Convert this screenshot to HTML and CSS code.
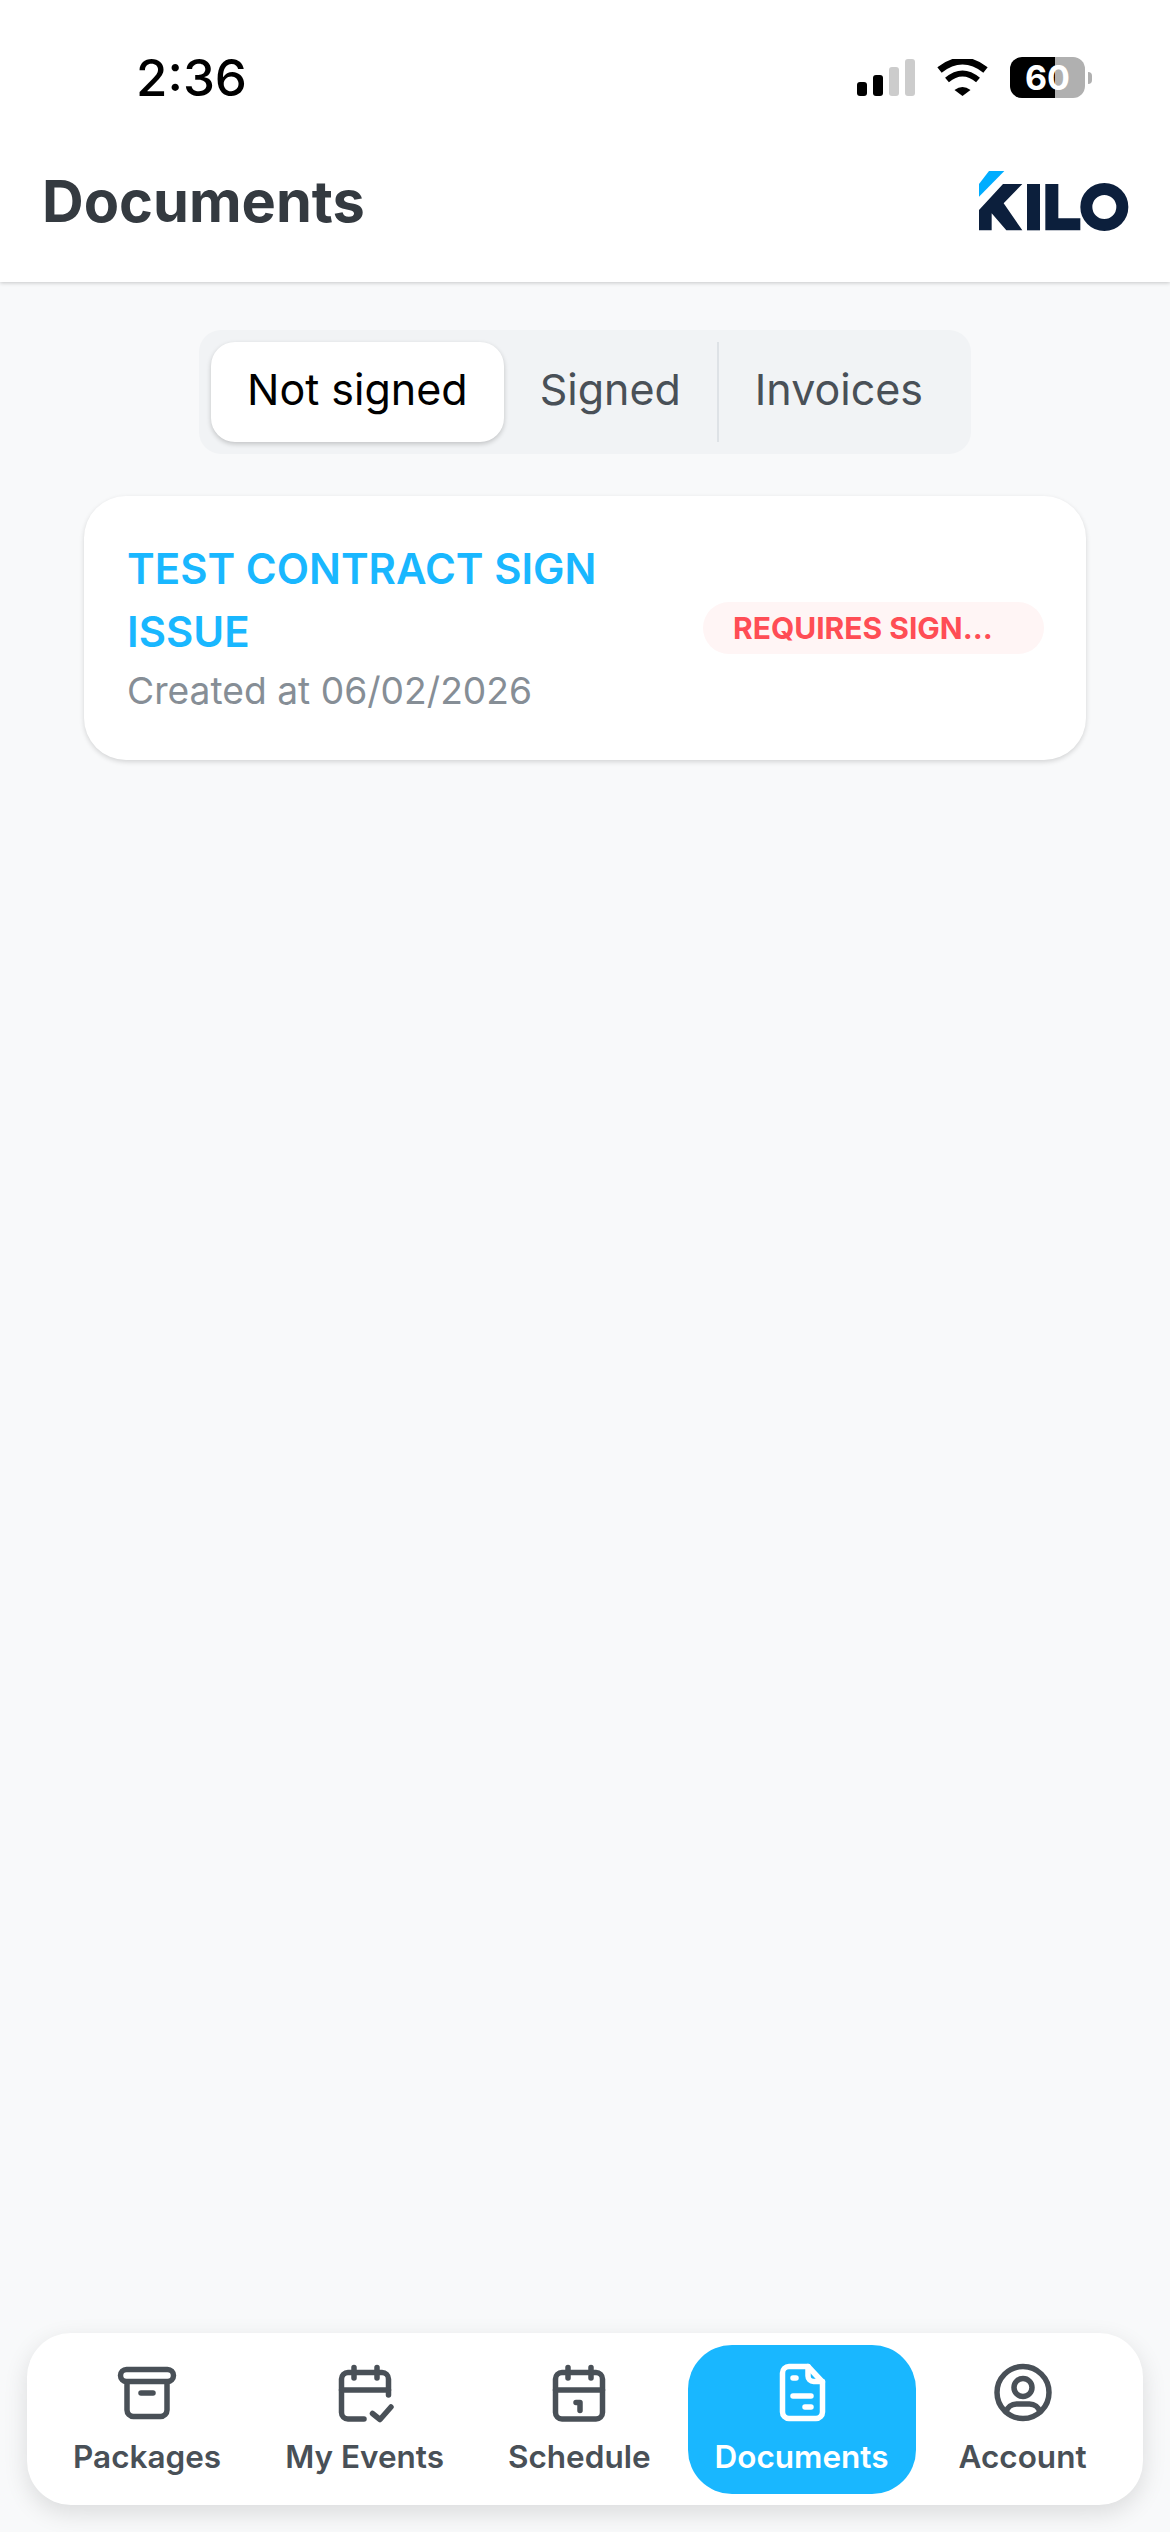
FILE: index.html
```html
<!DOCTYPE html>
<html lang="en">
<head>
  <meta charset="UTF-8" />
  <meta name="viewport" content="width=device-width, initial-scale=1.0"/>
  <title>Documents</title>
  <link rel="stylesheet" href="styles.css">
</head>
<body>
  <header class="header">
    <div class="status-bar">
      <span class="time">2:36</span>
      <div class="status-icons">
        <div class="signal">
          <span class="bar bar-on bar-1"></span>
          <span class="bar bar-on bar-2"></span>
          <span class="bar bar-3"></span>
          <span class="bar bar-4"></span>
        </div>
        <svg class="wifi" width="51" height="37" viewBox="0 0 51 37">
          <path d="M2.5 11 Q25.5 -7 48.5 11" fill="none" stroke="#000" stroke-width="7"/>
          <path d="M10 21 Q25.500 8 41 21" fill="none" stroke="#000" stroke-width="6"/>
          <path d="M17.500 31 Q25.500 25 33.500 31 L25.500 37 Z" fill="#000"/>
        </svg>
        <div class="battery">
          <div class="battery-body">60</div>
          <span class="battery-nub"></span>
        </div>
      </div>
    </div>
    <div class="title-row">
      <h1>Documents</h1>
      <svg class="logo" width="150" height="60" viewBox="54 33 450 180" aria-label="KILO">
        <path d="M84 33 H130 L54 110 V72 Z" fill="#00adff"/>
        <path d="M54 150 L126 72 H184 L128 130 L184 211 H136 L92 160 V211 H54 Z" fill="#0c1f3c"/>
        <rect x="198" y="72" width="39" height="139" fill="#0c1f3c"/>
        <path d="M253 72 H292 V175 H358 V211 H253 Z" fill="#0c1f3c"/>
        <circle cx="430" cy="141" r="54" fill="none" stroke="#0c1f3c" stroke-width="36"/>
      </svg>
    </div>
  </header>

  <main class="content">
    <div class="tabs">
      <div class="tab tab-active">Not signed</div>
      <div class="tab">Signed</div>
      <div class="tab tab-divided">Invoices</div>
    </div>

    <div class="card">
      <div class="card-text">
        <div class="card-title">TEST CONTRACT SIGN ISSUE</div>
        <div class="card-date">Created at 06/02/2026</div>
      </div>
      <div class="badge">REQUIRES SIGN...</div>
    </div>
  </main>

  <nav class="nav">
    <div class="nav-item">
      <svg class="nav-icon" viewBox="0 0 64 64">
        <rect x="5.500" y="7.500" width="53" height="12" rx="6"/>
        <path d="M12 20 V48 a6.500 6.500 0 0 0 6.500 6.500 H45.500 a6.500 6.500 0 0 0 6.500 -6.500 V20"/>
        <path d="M26 31 H38"/>
      </svg>
      <span>Packages</span>
    </div>
    <div class="nav-item">
      <svg class="nav-icon" viewBox="0 0 64 64">
        <path d="M31 57 H15 a6.500 6.500 0 0 1 -6.500 -6.500 V17 a6.500 6.500 0 0 1 6.500 -6.500 H49 a6.500 6.500 0 0 1 6.500 6.500 V33"/>
        <path d="M21 5.500 V16 M44 5.500 V16 M8.500 28 H55.500"/>
        <path d="M39.500 51.500 L47 57.500 L58 45"/>
      </svg>
      <span>My Events</span>
    </div>
    <div class="nav-item">
      <svg class="nav-icon" viewBox="0 0 64 64">
        <rect x="8.500" y="10.500" width="47" height="46.500" rx="6.500"/>
        <path d="M21 5.500 V16 M44 5.500 V16 M8.500 28 H55.500"/>
        <path d="M29 40.500 H33 V48.500"/>
      </svg>
      <span>Schedule</span>
    </div>
    <div class="nav-item nav-item-active">
      <svg class="nav-icon" viewBox="0 0 64 64">
        <path d="M38 4.500 H19 a6.500 6.500 0 0 0 -6.500 6.500 V50 a6.500 6.500 0 0 0 6.500 6.500 H46 a6.500 6.500 0 0 0 6.500 -6.500 V20 Z"/>
        <path d="M38 4.500 V14 a5.500 5.500 0 0 0 5.500 5.500 H52.500"/>
        <path d="M23 16 H26 M23 34 H41 M35 45 H41"/>
      </svg>
      <span>Documents</span>
    </div>
    <div class="nav-item">
      <svg class="nav-icon" viewBox="0 0 64 64">
        <circle cx="32" cy="30.500" r="26"/>
        <circle cx="32" cy="25.500" r="9"/>
        <path d="M15 50 a11 11 0 0 1 10.500 -8 H38.500 a11 11 0 0 1 10.500 8"/>
      </svg>
      <span>Account</span>
    </div>
  </nav>
</body>
</html>
```

FILE: styles.css
```css
:root {
  --primary: #19b7ff;
  --page: #f8f9fa;
  --heading: #343a40;
  --icon: #495057;
  --muted: #868e96;
}

* {
  box-sizing: border-box;
}

html, body {
  height: 100%;
}

body {
  margin: 0;
  display: flex;
  flex-direction: column;
  min-height: 2532px;
  font-family: Inter, "Noto Sans", sans-serif;
  background: var(--page);
  color: var(--heading);
}

.header {
  height: 282px;
  background: #fff;
  box-shadow: 0 1px 4px rgba(0,0,0,0.2);
}

.status-bar {
  height: 154px;
  padding: 57px 78px 0 136px;
  display: flex;
  justify-content: space-between;
  align-items: flex-start;
}

.time {
  font-size: 51px;
  line-height: 42px;
  font-weight: 500;
  color: #000;
}

.status-icons {
  display: flex;
  align-items: flex-start;
}

.signal {
  display: flex;
  align-items: flex-end;
  gap: 6px;
  height: 37px;
  margin-top: 2px;
}

.bar {
  width: 10px;
  border-radius: 3px;
  background: #ccc;
}

.bar-on {
  background: #000;
}

.bar-1 { height: 14px; }
.bar-2 { height: 21px; }
.bar-3 { height: 29px; }
.bar-4 { height: 37px; }

.wifi {
  margin: 2px 22px 0;
}

.battery {
  display: flex;
  align-items: center;
  gap: 3px;
}

.battery-body {
  width: 75px;
  height: 41px;
  border-radius: 12px;
  background: linear-gradient(90deg, #000 60%, #b0b0b0 60%);
  color: #fff;
  font-size: 34px;
  font-weight: 700;
  line-height: 41px;
  text-align: center;
}

.battery-nub {
  width: 4px;
  height: 12px;
  border-radius: 0 4px 4px 0;
  background: #b0b0b0;
}

.title-row {
  display: flex;
  justify-content: space-between;
  align-items: flex-start;
  padding: 0 41px 0 42px;
}

h1 {
  margin: 12px 0 0;
  font-size: 57.700px;
  line-height: 70px;
  font-weight: 700;
  color: var(--heading);
}

.logo {
  margin-top: 17px;
}

.content {
  flex: 1;
  display: flex;
  flex-direction: column;
  align-items: center;
  padding-top: 48px;
}

.tabs {
  display: flex;
  padding: 12px;
  height: 124px;
  background: #f1f3f5;
  border-radius: 22px;
}

.tab {
  padding: 0 36px 6px;
  font-size: 43px;
  line-height: 94px;
  color: var(--icon);
}

.tab-active {
  background: #fff;
  color: #000;
  border-radius: 24px;
  box-shadow: 0 2px 5px rgba(0,0,0,0.2);
}

.tab-divided {
  border-left: 2px solid #dee2e6;
}

.card {
  width: 1002px;
  height: 264px;
  margin-top: 42px;
  padding: 0 42px 0 43px;
  display: flex;
  align-items: center;
  justify-content: space-between;
  background: #fff;
  border-radius: 42px;
  box-shadow: 0 2px 5px rgba(0,0,0,0.15);
}

.card-text {
  width: 500px;
  margin-top: -2px;
}

.card-title {
  font-size: 42px;
  line-height: 63px;
  font-weight: 600;
  color: var(--primary);
}

.card-date {
  margin-top: 2px;
  font-size: 37.200px;
  line-height: 52px;
  color: var(--muted);
}

.badge {
  width: 341px;
  height: 52px;
  padding-left: 30px;
  border-radius: 26px;
  background: #fff5f5;
  color: #ff4d55;
  font-size: 30px;
  font-weight: 700;
  line-height: 52px;
  white-space: nowrap;
}

.nav {
  height: 172px;
  margin: 0 27px 27px;
  padding: 12px 19px 11px;
  display: flex;
  gap: 10px;
  background: #fff;
  border-radius: 44px;
  box-shadow: 0 8px 24px rgba(0,0,0,0.12);
}

.nav-item {
  display: flex;
  flex-direction: column;
  align-items: center;
  padding: 17px 27px 0;
  font-size: 31.500px;
  font-weight: 600;
  color: var(--icon);
  border-radius: 44px;
}

.nav-item span {
  margin-top: 11px;
  line-height: 40px;
  white-space: nowrap;
}

.nav-item-active {
  margin-right: 6px;
  background: var(--primary);
  color: #fff;
}

.nav-icon {
  width: 64px;
  height: 64px;
  fill: none;
  stroke: currentColor;
  stroke-width: 5.500;
  stroke-linecap: round;
  stroke-linejoin: round;
}
```
